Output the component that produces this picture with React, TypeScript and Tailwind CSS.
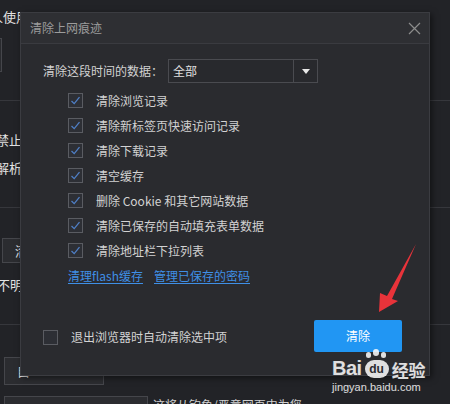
import React from "react";

const items = [
  "清除浏览记录",
  "清除新标签页快速访问记录",
  "清除下载记录",
  "清空缓存",
  "删除 Cookie 和其它网站数据",
  "清除已保存的自动填充表单数据",
  "清除地址栏下拉列表",
];

function CheckBox({ checked }: { checked: boolean }) {
  return (
    <div className="w-[15px] h-[15px] border border-[#5a5c62] bg-[#2d2f35] flex items-center justify-center shrink-0">
      {checked && (
        <svg width="11" height="11" viewBox="0 0 11 11">
          <path d="M1.5 6 L4.2 8.6 L9.5 2.2" fill="none" stroke="#4f7fc6" strokeWidth="1.3" />
        </svg>
      )}
    </div>
  );
}

export default function App() {
  return (
    <div className="relative w-[450px] h-[404px] overflow-hidden bg-[#222327] font-['Noto_Sans_CJK_SC','Noto_Sans',sans-serif] text-[12px]">
      {/* background settings page */}
      <div className="flex flex-col text-[13px] text-[#e2e2e2]">
        <div className="h-[30px] flex items-center ml-[-10px] pt-[2px] whitespace-nowrap">
          <span className="leading-none w-[44px] shrink-0">人使用</span>
          <span className="leading-none ml-[144px] mt-[6px]">钓鱼网站或恶意网页时发出警告</span>
        </div>
        <div className="h-[34px] w-[12px] ml-[-10px] mt-[8px] border border-[#45464b] bg-[#2a2b2f]" />
        <div className="h-[28px]" />
        <div className="h-px bg-[#36373c]" />
        <div className="h-[28px]" />
        <div className="h-[22px] flex items-center ml-[-4px]">禁止拍</div>
        <div className="h-[6px]" />
        <div className="h-[22px] flex items-center ml-[-4px]">解析</div>
        <div className="h-[28px]" />
        <div className="h-px bg-[#36373c]" />
        <div className="h-[30px]" />
        <div className="h-[25px] w-[40px] ml-[2px] border border-[#45464b] bg-[#2b2c30] flex items-center pl-[12px]">清</div>
        <div className="h-[24px] flex items-center ml-[-3px] mt-[10px]">不明</div>
        <div className="h-[27px]" />
        <div className="h-px bg-[#36373c]" />
        <div className="h-[32px]" />
        <div className="h-[28px] w-[100px] ml-[4px] border border-[#45464b] bg-[#2b2c30] flex items-center pl-[12px]">自</div>
        <div className="h-[11px]" />
        <div className="flex items-start">
          <div className="h-[20px] w-[144px] ml-[4px] border border-[#45464b] bg-[#2b2c30]" />
          <span className="ml-[5px] mt-[0px] text-[12px] text-[#d0d0d0]">这将从钓鱼/恶意网页中为您</span>
        </div>
      </div>

      {/* dialog */}
      <div className="absolute left-[20px] top-[12px] w-[410px] h-[364px] border border-[#3b3c41] bg-[#2a2b2f] shadow-[2px_2px_6px_rgba(0,0,0,0.5)] flex flex-col">
        <div className="h-[31px] shrink-0 bg-[#2e2f33] border-b border-[#3a3b40] flex items-center justify-between pl-[9px] pr-[8px]">
          <span className="text-[#9c9c9c] text-[12px]">清除上网痕迹</span>
          <svg width="13" height="13" viewBox="0 0 13 13">
            <path d="M1 1 L12 12 M12 1 L1 12" stroke="#8c8c8c" strokeWidth="1.2" />
          </svg>
        </div>
        <div className="flex flex-col flex-1 text-[#d2d2d2]">
          <div className="flex items-center pl-[22px] mt-[15px] h-[24px]">
            <span className="w-[125px]">清除这段时间的数据：</span>
            <div className="w-[150px] h-[24px] border border-[#4a4b50] bg-[#28292d] flex items-center">
              <span className="flex-1 pl-[4px] text-[#e0e0e0]">全部</span>
              <div className="w-[24px] h-full border-l border-[#4a4b50] flex items-center justify-center">
                <svg width="8" height="5" viewBox="0 0 8 5">
                  <path d="M0 0 L8 0 L4 5 Z" fill="#e8e8e8" />
                </svg>
              </div>
            </div>
          </div>
          <div className="flex flex-col pl-[47px] mt-[5px]">
            {items.map((t) => (
              <div key={t} className="h-[25px] flex items-center gap-[13px]">
                <CheckBox checked />
                <span>{t}</span>
              </div>
            ))}
          </div>
          <div className="flex items-center pl-[47px] mt-[4px] h-[18px] gap-[11px] text-[#3f8fe6]">
            <span className="underline underline-offset-2">清理flash缓存</span>
            <span className="underline underline-offset-2">管理已保存的密码</span>
          </div>
          <div className="flex-1" />
          <div className="flex items-center justify-between pl-[22px] pr-[27px] pb-[23px]">
            <div className="flex items-center gap-[13px] mt-[2px]">
              <CheckBox checked={false} />
              <span>退出浏览器时自动清除选中项</span>
            </div>
            <div className="w-[88px] h-[32px] rounded-[2px] bg-[#2196f3] text-white flex items-center justify-center">
              清除
            </div>
          </div>
        </div>
      </div>

      {/* red arrow annotation */}
      <svg className="absolute left-0 top-0 pointer-events-none" width="450" height="404" viewBox="0 0 450 404">
        <polygon points="379,312 380,293 387,296 416,244 392,299 398,301" fill="#e8333a" />
      </svg>

      {/* watermark */}
      <div className="absolute left-[332px] top-[349px] flex flex-col items-start text-white/85 pointer-events-none font-['Liberation_Sans',sans-serif]">
        <div className="flex items-end h-[30px]">
          <span className="text-[20px] font-bold leading-none tracking-[-0.5px] mb-[1px]">Bai</span>
          <div className="relative w-[28px] h-[30px] mx-[1px]">
            <div className="absolute left-[3px] top-[3px] w-[5px] h-[6px] rounded-full bg-white/85" />
            <div className="absolute left-[10px] top-0 w-[6px] h-[7px] rounded-full bg-white/85" />
            <div className="absolute left-[18px] top-[3px] w-[5px] h-[6px] rounded-full bg-white/85" />
            <div className="absolute left-[2px] top-[11px] w-[24px] h-[18px] rounded-[9px] bg-white/85 flex items-center justify-center">
              <span className="text-[12px] font-bold text-[#2a2b2f] leading-none">du</span>
            </div>
          </div>
          <span className="text-[17px] font-bold leading-none font-['Noto_Sans_CJK_SC',sans-serif] mb-[1px]">经验</span>
        </div>
        <span className="text-[11px] mt-[3px] leading-none">jingyan.baidu.com</span>
      </div>
    </div>
  );
}
